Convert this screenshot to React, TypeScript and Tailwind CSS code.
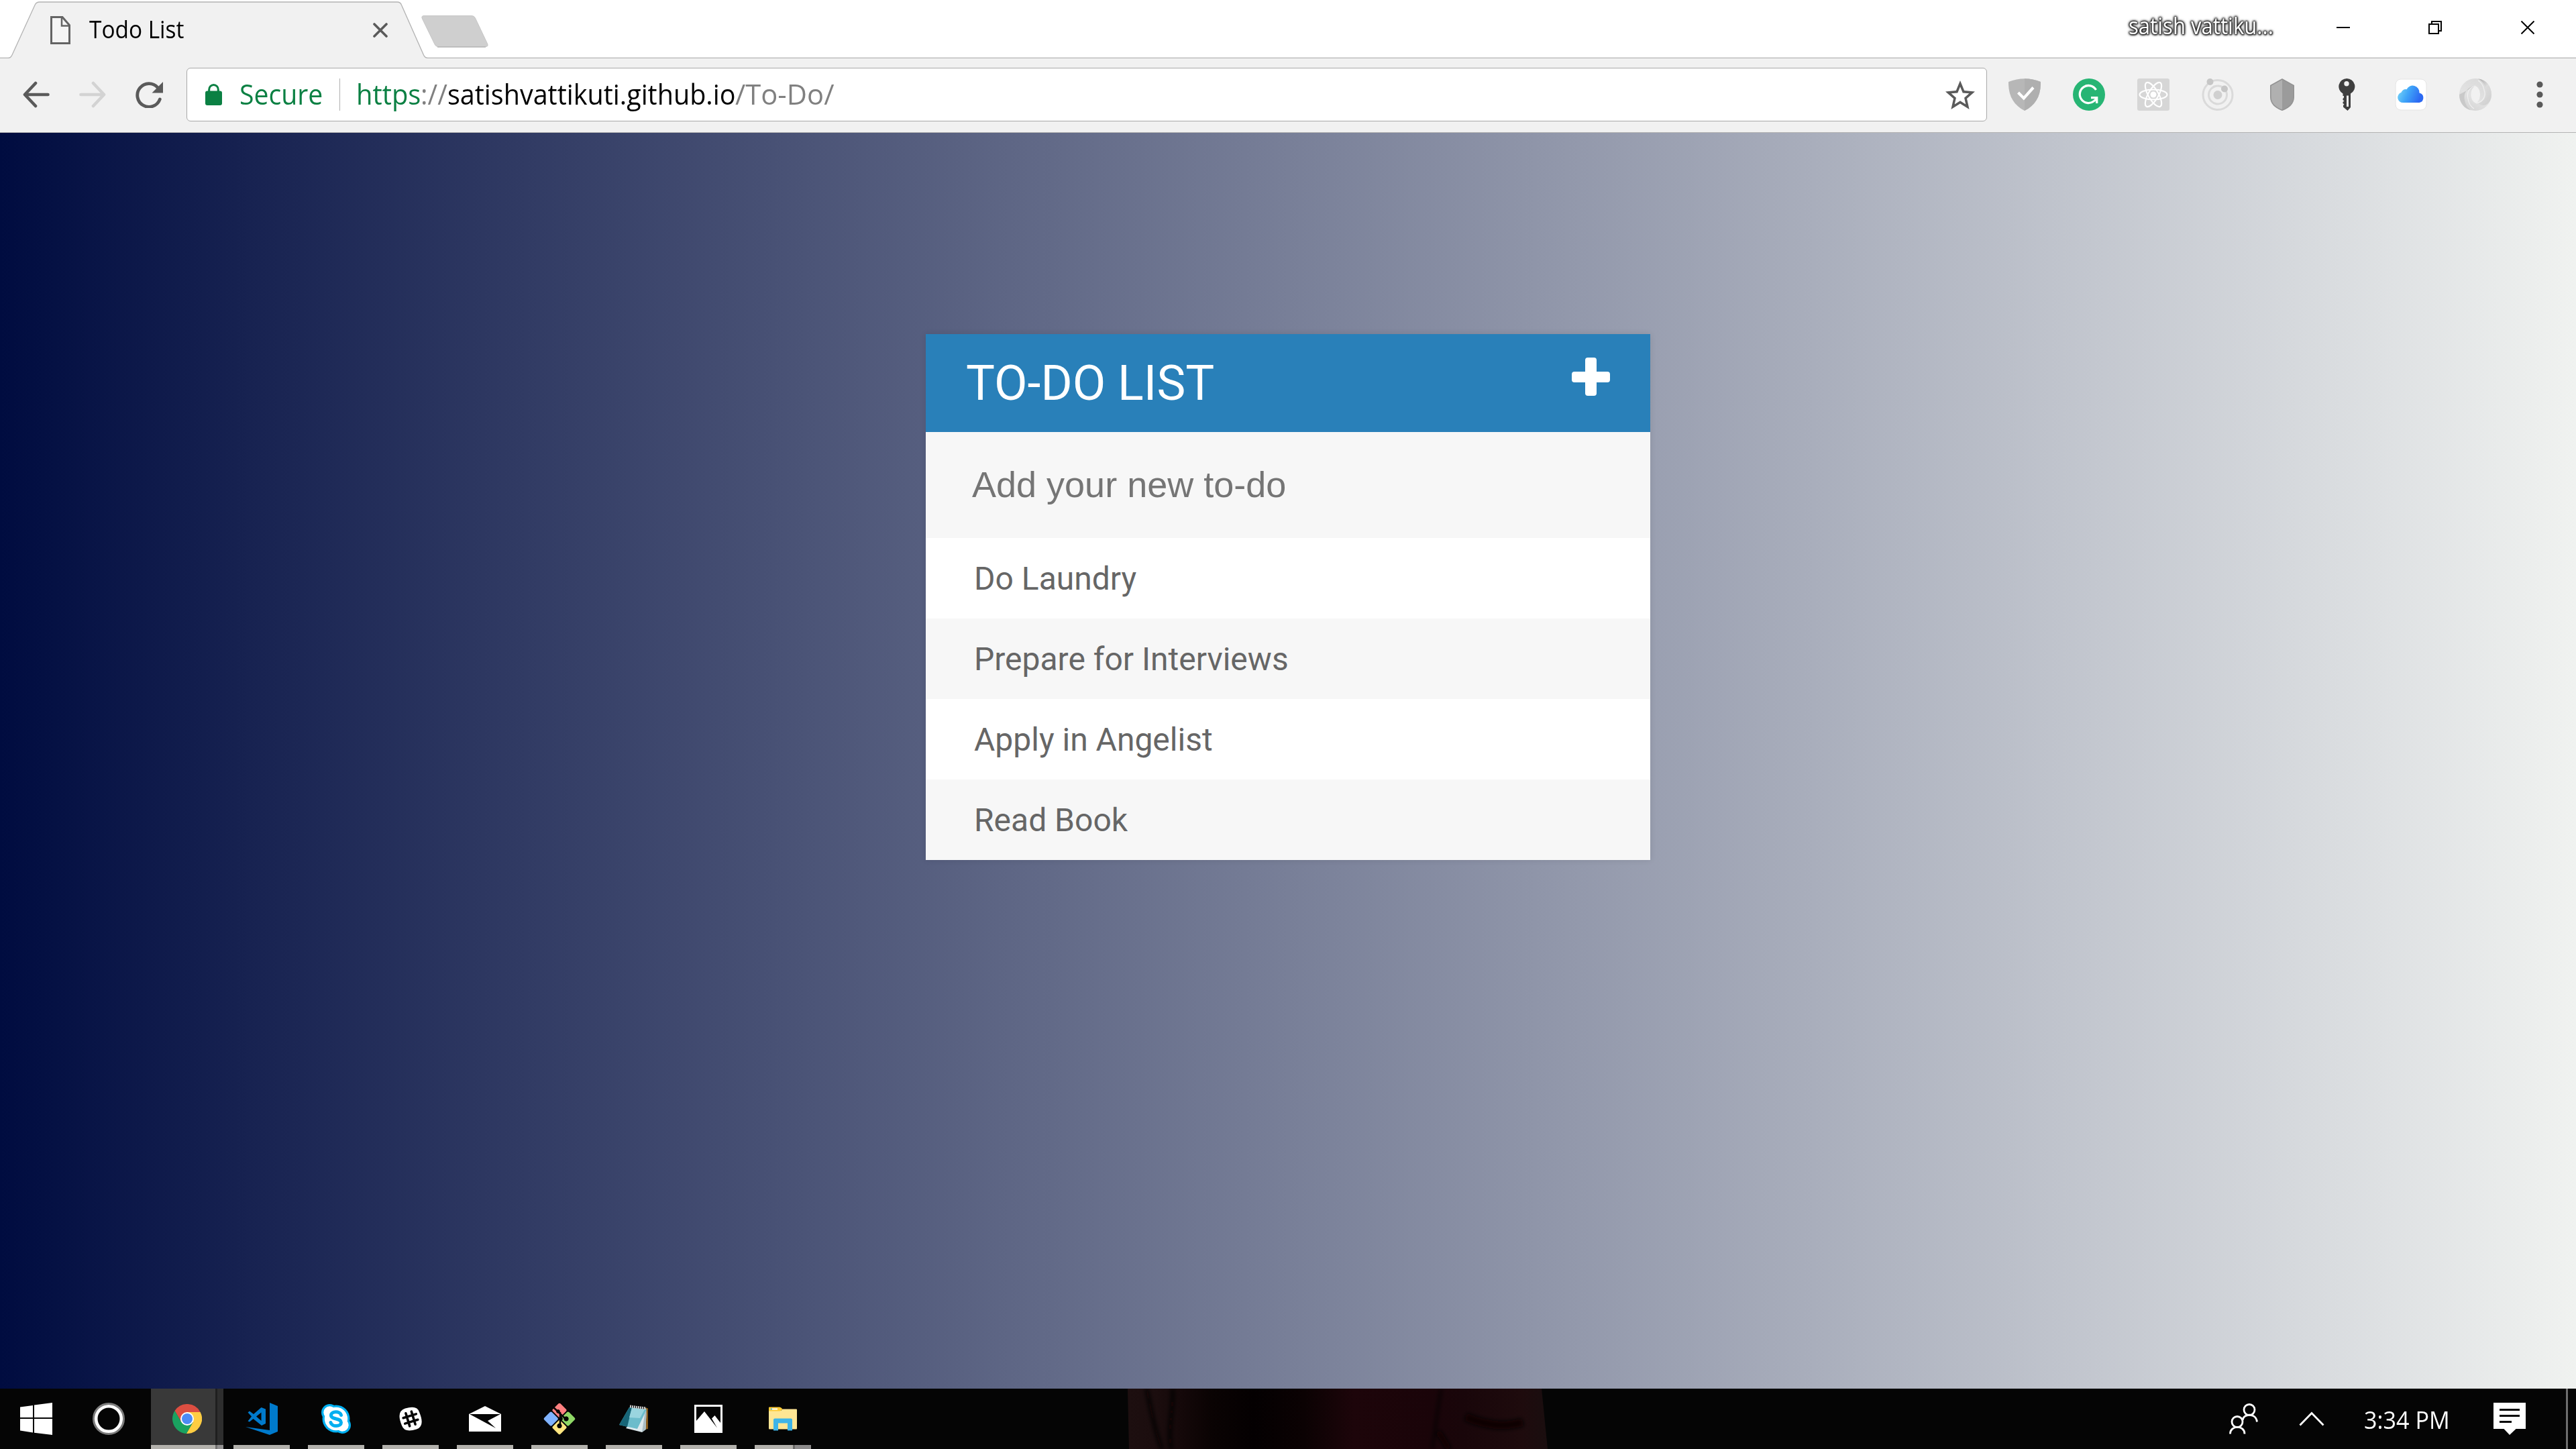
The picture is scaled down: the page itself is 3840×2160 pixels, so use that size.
import React, { useLayoutEffect, useRef, useState } from 'react';

const todos = ['Do Laundry', 'Prepare for Interviews', 'Apply in Angelist', 'Read Book'];

/* Text that is condensed or widened horizontally to an exact width. */
function Fit({ width, className = '', children }: { width: number; className?: string; children: React.ReactNode }) {
  const ref = useRef<HTMLSpanElement>(null);
  const [scale, setScale] = useState(1);
  useLayoutEffect(() => {
    if (ref.current) setScale(width / ref.current.offsetWidth);
  }, [width]);
  return (
    <span className={'block shrink-0 whitespace-nowrap ' + className} style={{ width }}>
      <span ref={ref} className="inline-block origin-left" style={{ transform: `scaleX(${scale})` }}>
        {children}
      </span>
    </span>
  );
}

function TabStrip() {
  return (
    <div className="relative flex h-[87px] w-full bg-white">
      <svg className="absolute inset-0" width="3840" height="87" viewBox="0 0 3840 87">
        <path
          d="M-2 86.5H13Q17 86.5 18.5 82L52.5 7Q54.500 3 59 3H593Q597.500 3 599 7L632 82Q633.500 86.500 638 86.500H3842V90H-2Z"
          fill="#f1f1f1"
        />
        <path
          d="M-2 86.500H12Q16 86.500 18 82L52 7.500Q54 3 59 3H592Q597 3 598.500 7.500L631.500 82Q633.500 86.500 638 86.500H3842"
          fill="none"
          stroke="#b3b3b3"
          strokeWidth="1.300"
        />
        <path d="M632 23.500H703Q707 23.500 708.500 27L726.500 65Q728.500 69.500 724 69.500H653Q649.500 69.500 648 66L629.500 28Q627.500 23.500 632 23.500Z" fill="#cfcfcf" stroke="#c6c6c6" />
        <path d="M652 70H724" stroke="#b4b4b4" strokeWidth="1.300" />
      </svg>
      <div className="relative flex h-full w-full pl-[75px]">
        <svg className="mt-6 shrink-0" width="30" height="42" viewBox="0 0 30 42">
          <path d="M1.500 1.500H18L28.500 13.500V40.500H1.500Z" fill="#f5f5f5" stroke="#646464" strokeWidth="3" />
          <path d="M17 2V14.500H28" fill="none" stroke="#646464" strokeWidth="2.500" />
        </svg>
        <Fit width={141} className="ml-7 mt-2 h-[72px] text-[36px] leading-[72px] text-black">
          Todo List
        </Fit>
        <svg className="ml-[282px] mt-[34px] shrink-0" width="22" height="22" viewBox="0 0 22 22">
          <path d="M2 2L20 20M20 2L2 20" stroke="#5a5a5a" strokeWidth="3.600" strokeLinecap="round" />
        </svg>
        <Fit
          width={216}
          className="ml-[2595px] mt-1.5 h-[64px] text-[35px] leading-[64px] text-white [text-shadow:0_0_2px_#222,0_0_3px_#222,0_0_3px_#222,0_0_4px_#333,0_0_4px_#333,0_0_6px_#444,1px_1px_2px_#333]"
        >
          satish vattiku...
        </Fit>
        <svg className="ml-[94px] mt-[31px] shrink-0" width="20" height="20" viewBox="0 0 20 20">
          <path d="M0 10H20" stroke="#000" strokeWidth="2" />
        </svg>
        <svg className="ml-[117px] mt-[31px] shrink-0" width="20" height="20" viewBox="0 0 20 20">
          <path d="M1 5H15V19H1ZM5 5V1H19V15H15" fill="none" stroke="#000" strokeWidth="2" />
        </svg>
        <svg className="ml-[118px] mt-[31px] shrink-0" width="20" height="20" viewBox="0 0 20 20">
          <path d="M.5 .5L19.500 19.500M19.500 .5L.5 19.500" stroke="#000" strokeWidth="2" />
        </svg>
      </div>
    </div>
  );
}

function Extensions() {
  return (
    <div className="ml-8 flex shrink-0 gap-12">
      <svg width="48" height="48" viewBox="0 0 48 48">
        <path d="M0 5Q24 -4.500 48 5C48.500 26 40 40 24 48C8 40 -.5 26 0 5Z" fill="#b7b7b7" />
        <path d="M24 .3Q37 .5 48 5C48.500 26 40 40 24 48Z" fill="#afafaf" />
        <path d="M14.500 21L22.800 29.500L37 13.500" fill="none" stroke="#fff" strokeWidth="4.200" />
      </svg>
      <svg width="48" height="48" viewBox="0 0 48 48">
        <circle cx="24" cy="24" r="24" fill="#27b574" />
        <path d="M34.500 17A13 13 0 1 0 31 34Q34.500 31.500 35 28.500" fill="none" stroke="#fff" strokeWidth="3.300" />
        <path d="M27 28.700H35.700V37" fill="none" stroke="#fff" strokeWidth="3.300" />
      </svg>
      <svg width="48" height="48" viewBox="0 0 48 48">
        <rect width="48" height="48" rx="3" fill="#d6d6d6" />
        <g fill="none" stroke="#fff" strokeWidth="2.200">
          <ellipse cx="24" cy="24" rx="20.500" ry="7.500" />
          <ellipse cx="24" cy="24" rx="20.500" ry="7.500" transform="rotate(60 24 24)" />
          <ellipse cx="24" cy="24" rx="20.500" ry="7.500" transform="rotate(120 24 24)" />
        </g>
        <circle cx="24" cy="24" r="4.500" fill="#fff" />
      </svg>
      <svg width="48" height="48" viewBox="0 0 48 48">
        <g fill="none" stroke="#dadada" strokeWidth="3">
          <circle cx="24" cy="24.500" r="22" />
          <circle cx="24" cy="24.500" r="13.500" />
        </g>
        <circle cx="24" cy="24.500" r="6.500" fill="#d0d0d0" />
        <circle cx="12.500" cy="5" r="5" fill="#c6c6c6" />
        <circle cx="34" cy="15.500" r="5" fill="#c6c6c6" />
      </svg>
      <svg width="48" height="48" viewBox="0 0 48 48">
        <path d="M24 1L41.200 10.500V28C41 38 34 43.500 24 47.300C14 43.500 7 38 6.800 28V10.500Z" fill="#b0b0b0" />
        <path d="M24 1L41.200 10.500V28C41 38 34 43.500 24 47.300Z" fill="#9b9b9b" />
        <path d="M24 1L41.200 10.500V28C41 38 34 43.500 24 47.300C14 43.500 7 38 6.800 28V10.500Z" fill="none" stroke="#939393" strokeWidth="1.600" />
      </svg>
      <svg width="48" height="48" viewBox="0 0 48 48">
        <path
          fillRule="evenodd"
          d="M24.300 0A12 12 0 0 1 30 22.600V43L25.500 48L19 42.500V40L20.500 38.500L18.500 37V35L20.500 33.500L18.500 32V30L20 28.500V26H18.500V22.500A12 12 0 0 1 24.300 0ZM24 4A3.700 3.700 0 1 0 24 11.400A3.700 3.700 0 1 0 24 4ZM24 25.500V42H27V25.500Z"
          fill="#3f3f3f"
        />
      </svg>
      <svg width="48" height="48" viewBox="0 0 48 48">
        <defs>
          <linearGradient id="cloud" x1="0" y1="0" x2="1" y2="0.300">
            <stop offset="0" stopColor="#7fdcf7" />
            <stop offset="0.500" stopColor="#3fa4f8" />
            <stop offset="1" stopColor="#2c69f2" />
          </linearGradient>
        </defs>
        <rect x="1" y="1" width="46" height="46" rx="8" fill="#fff" stroke="#e4e4e4" />
        <path d="M12 36A7.800 7.800 0 0 1 9.500 20.800A6.500 6.500 0 0 1 17.500 16.300A10 10 0 0 1 36.500 21.500A7.400 7.400 0 0 1 36.500 36Z" fill="url(#cloud)" />
      </svg>
      <svg width="48" height="48" viewBox="0 0 48 48">
        <defs>
          <linearGradient id="swirlA" x1="0" y1="1" x2="0.600" y2="0">
            <stop offset="0" stopColor="#cfcfcf" />
            <stop offset="0.500" stopColor="#e2e2e2" />
            <stop offset="1" stopColor="#dadada" />
          </linearGradient>
          <linearGradient id="swirlB" x1="0.200" y1="0" x2="0.800" y2="1">
            <stop offset="0" stopColor="#b4b4b4" />
            <stop offset="0.400" stopColor="#dcdcdc" />
            <stop offset="1" stopColor="#d0d0d0" />
          </linearGradient>
        </defs>
        {/* ring */}
        <path
          fillRule="evenodd"
          d="M24 0A24 24 0 1 1 24 48A24 24 0 1 1 24 0ZM24 11C20 13 17.500 18 17.500 24C17.500 30 20 35 25 37C28.500 35 31 30 31 24C31 18 28.500 13 24 11Z"
          fill="url(#swirlA)"
        />
        {/* overlapping blades */}
        <path d="M28 .3C41 2 48 12 48 24C48 36 38 45 28 37C36 35 41 28 40 19C39 10 35 4 28 .3Z" fill="url(#swirlB)" />
        <path d="M24 11C12 12 6 22 8 32C9 39 13 45 18 47.500C7 45 0 36 0 24" fill="#c9c9c9" />
        <path d="M24 11C14 13 11 22 13 30C14 37 17 42 22 45" fill="none" stroke="#f0f0f0" strokeWidth="1.200" />
        <path d="M25 37C36 35 40 26 37 17C36 11 33 6 28 3" fill="none" stroke="#f0f0f0" strokeWidth="1.200" />
      </svg>
    </div>
  );
}

function Toolbar() {
  return (
    <div className="flex h-[111px] w-full items-center border-b border-[#b3b3b3] bg-[#f1f1f1] pb-0.5 pl-[34px]">
      <svg className="shrink-0" width="40" height="40" viewBox="0 0 40 40">
        <path d="M37.500 20H3M19 3L3 20L19 37" fill="none" stroke="#5a5a5a" strokeWidth="4.600" strokeLinecap="round" strokeLinejoin="round" />
      </svg>
      <svg className="ml-11 shrink-0" width="40" height="40" viewBox="0 0 40 40">
        <path d="M2.500 20H37M21 3L37 20L21 37" fill="none" stroke="#d3d3d3" strokeWidth="4.600" strokeLinecap="round" strokeLinejoin="round" />
      </svg>
      <svg className="ml-11 shrink-0" width="41" height="40" viewBox="0 0 41 40">
        <path d="M33 9.500A17.300 17.300 0 1 0 36.300 27" fill="none" stroke="#5a5a5a" strokeWidth="4.800" strokeLinecap="round" />
        <path d="M41 1V17.500H24.500Z" fill="#5a5a5a" />
      </svg>
      <div className="ml-[35px] flex h-20 w-[2684px] shrink-0 items-center rounded-[6px] border border-[#a9a9a9] bg-white pl-[27px] text-[42px] leading-[76px]">
        <svg className="shrink-0" width="25" height="32" viewBox="0 0 25 32">
          <rect y="10.500" width="25" height="21.500" rx="3" fill="#0b8043" />
          <path d="M5.700 12V8.500A6.800 7 0 0 1 19.300 8.500V12" fill="none" stroke="#0b8043" strokeWidth="3" />
        </svg>
        <Fit width={124} className="-mt-[3px] ml-[26px] text-[#0b8043]">
          Secure
        </Fit>
        <div className="ml-[25px] h-12 w-px bg-[#b0b0b0]" />
        <Fit width={96} className="-mt-[3px] ml-6 text-[#0b8043]">
          https
        </Fit>
        <Fit width={40} className="-mt-[3px] text-[#808080]">
          ://
        </Fit>
        <Fit width={429} className="-mt-[3px] text-black">
          satishvattikuti.github.io
        </Fit>
        <Fit width={147} className="-mt-[3px] text-[#808080]">
          /To-Do/
        </Fit>
        <svg className="ml-auto mr-[17px] shrink-0" width="44" height="43" viewBox="2 2 20 19" preserveAspectRatio="none">
          <path
            d="M22 9.240l-7.190-.62L12 2 9.190 8.630 2 9.240l5.460 4.730L5.820 21 12 17.270 18.180 21l-1.630-7.030L22 9.240zM12 15.400l-3.760 2.270 1-4.280-3.320-2.880 4.380-.38L12 6.100l1.710 4.040 4.380.38-3.320 2.880 1 4.280L12 15.400z"
            fill="#5a5a5a"
          />
        </svg>
      </div>
      <Extensions />
      <svg className="ml-[67px] shrink-0" width="10" height="40" viewBox="0 0 10 40">
        <g fill="#5a5a5a">
          <circle cx="5" cy="5" r="4.600" />
          <circle cx="5" cy="20" r="4.600" />
          <circle cx="5" cy="35" r="4.600" />
        </g>
      </svg>
    </div>
  );
}

function TodoCard() {
  return (
    <div className="w-[1080px] bg-[#f7f7f7] font-['Roboto',sans-serif] shadow-[0_0_9px_rgba(0,0,0,0.1)]">
      <div className="flex h-[146px] items-center justify-between bg-[#2980b9] px-[60px] text-[72px] leading-[146px] text-white">
        <h1 className="pt-0.5">TO-DO LIST</h1>
        <svg className="mb-[19px]" width="57" height="57" viewBox="0 0 57 57">
          <rect x="20" width="17" height="57" rx="4" fill="#fff" />
          <rect y="21" width="57" height="16" rx="4" fill="#fff" />
        </svg>
      </div>
      <div className="h-[158px] pl-[69px] font-['Liberation_Sans',sans-serif] text-[54px] leading-[156px] text-[#757575]">Add your new to-do</div>
      <ul className="text-[48px] leading-[122px] text-[#666]">
        {todos.map((t) => (
          <li key={t} className="h-[120px] bg-[#f7f7f7] pl-[72px] odd:bg-white">
            {t}
          </li>
        ))}
      </ul>
    </div>
  );
}

const vscode = (
  <svg width="48" height="48" viewBox="0 0 48 48">
    <path d="M36 0L48 5V43L36 48L0 36L36 41Z" fill="#007acc" />
    <path fillRule="evenodd" d="M23.500 7L30 9.500V31L24 34L11.500 24L6 28.500L3.500 27.500L9 20.500L3.500 14.500L6 12.500L12 17ZM23.500 14.500L16 20.500L23.500 27Z" fill="#007acc" />
  </svg>
);
const skype = (
  <svg width="44" height="44" viewBox="0 0 44 44">
    <g fill="#00aff0">
      <circle cx="22" cy="22" r="20.500" />
      <circle cx="12.500" cy="12.500" r="12.500" />
      <circle cx="31.500" cy="31.500" r="12.500" />
    </g>
    <g fill="#fff">
      <circle cx="22" cy="22" r="17.200" />
      <circle cx="12.500" cy="12.500" r="9.200" />
      <circle cx="31.500" cy="31.500" r="9.200" />
    </g>
    <path d="M29.500 16.500C28 10 14.500 10.500 14.500 16.800C14.500 23.500 29.500 20.500 29.500 27.500C29.500 34 15.500 34.500 14 27.500" fill="none" stroke="#00aff0" strokeWidth="5" strokeLinecap="round" />
  </svg>
);
const slack = (
  <svg width="36" height="36" viewBox="0 0 36 36">
    <path d="M10 2.500Q28 -3 31 8Q40 29 27 33.500Q9 39.500 5 28Q-4 7 10 2.500Z" fill="#fff" />
    <g transform="rotate(-17 18 18)" stroke="#050505" strokeWidth="3.600" strokeLinecap="round">
      <path d="M8 13.600H28M8 22.400H28M13.600 8V28M22.400 8V28" />
    </g>
  </svg>
);
const mail = (
  <svg width="48" height="38" viewBox="0 0 48 38">
    <path d="M0 12L24 0L48 12V38H0Z" fill="#fff" />
    <path d="M1 12H47L28 22L40 33Z" fill="#050505" />
  </svg>
);
const git = (
  <svg width="48" height="48" viewBox="0 0 48 48">
    <g transform="rotate(45 24 24)">
      <rect x="7" y="7" width="16" height="16" rx="2" fill="#ff8080" />
      <rect x="25" y="7" width="16" height="16" rx="2" fill="#8fd866" />
      <rect x="25" y="25" width="16" height="16" rx="2" fill="#ffe680" />
      <rect x="7" y="25" width="16" height="16" rx="2" fill="#80b3ff" />
    </g>
    <g stroke="#050505" fill="#050505">
      <path d="M14 6L33 24M25 14V35" strokeWidth="2.600" fill="none" />
      <circle cx="24" cy="34.500" r="3.200" />
      <circle cx="34" cy="24" r="3.200" />
      <circle cx="22" cy="13" r="2.400" />
      <circle cx="26" cy="24" r="2.400" />
    </g>
  </svg>
);
const notepad = (
  <svg width="44" height="42" viewBox="0 0 44 42">
    <path d="M38 4L43 5.500V36L38 37Z" fill="#8a5c1c" />
    <path d="M40 5L40.500 14L39.500 37L34 41L10 35L14 30Z" fill="#dce8ec" />
    <path d="M34 41L38 14L40.500 8L39.500 37Z" fill="#a9bcc3" />
    <path d="M15 4L41 7L27 36L0 30Z" fill="#6cbccb" />
    <path d="M15 4L19 4.500L12 33L0 30Z" fill="#176577" />
    <path d="M19 4.500L38 7L31 20L15 19Z" fill="#9ad5df" />
    <path d="M16 2.500L40 5.500" stroke="#c9c9c9" strokeWidth="4" strokeDasharray="2 1" />
  </svg>
);
const photos = (
  <svg width="42" height="42" viewBox="0 0 42 42">
    <rect width="42" height="42" fill="#fff" />
    <path d="M3 3H39V27L30.500 16L26 20.500L34 34.500L15 10L3 24Z" fill="#050505" />
  </svg>
);
const explorer = (
  <svg width="42" height="36" viewBox="0 0 42 36">
    <path d="M0 6H18L20.500 3.500H41Q42 3.500 42 4.500V32Q42 33.500 41 33.500H1Q0 33.500 0 32Z" fill="#ffe694" />
    <path d="M1 .5H16Q18 .5 20.500 3.500Q18 6.500 16 6.500H0V1.500Q0 .5 1 .5Z" fill="#ffcb35" />
    <path d="M3 3.500H13" stroke="#fff" strokeWidth="2" />
    <path d="M3 3.500H5" stroke="#3db4e8" strokeWidth="2" />
    <path d="M7 35.500V19.500Q7 17.500 9 17.500H33Q35 17.500 35 19.500V35.500H28V24.500H14V35.500Z" fill="#3db4e8" />
  </svg>
);

const apps = [vscode, skype, slack, mail, git, notepad, photos];

function AppButton({ children, split = false }: { children: React.ReactNode; split?: boolean }) {
  return (
    <div className="flex h-[90px] w-[84px] shrink-0 flex-col">
      <div className="flex h-[84px] items-center justify-center pt-1.5">{children}</div>
      <div className="flex h-1.5 w-full">
        <div className="grow bg-[#b3b1ac]" />
        {split && <div className="w-[3px] bg-[#6b6a68]" />}
        {split && <div className="w-6 bg-[#8d8b8b]" />}
      </div>
    </div>
  );
}

/* The wallpaper that shows faintly through the bar. */
function Backdrop() {
  return (
    <svg className="absolute left-[1680px] top-0" width="628" height="90" viewBox="0 0 628 90">
      <defs>
        <linearGradient id="cloth" x1="0" y1="0" x2="1" y2="0">
          <stop offset="0" stopColor="#1d0f10" />
          <stop offset="0.070" stopColor="#1b0d0e" />
          <stop offset="0.130" stopColor="#140809" />
          <stop offset="0.200" stopColor="#0a0303" />
          <stop offset="0.300" stopColor="#040001" />
          <stop offset="0.420" stopColor="#0b0203" />
          <stop offset="0.540" stopColor="#1d050a" />
          <stop offset="0.720" stopColor="#1a0409" />
          <stop offset="0.800" stopColor="#19060a" />
          <stop offset="0.940" stopColor="#1e0b0d" />
          <stop offset="1" stopColor="#1a0e0f" />
        </linearGradient>
        <filter id="soft" x="-50%" y="-50%" width="200%" height="200%">
          <feGaussianBlur stdDeviation="3" />
        </filter>
      </defs>
      <path d="M1 0H618L627 90H3Z" fill="url(#cloth)" />
      <g filter="url(#soft)" fill="none" stroke="#090203">
        <path d="M29 0C36 30 40 60 52 90" strokeWidth="5" />
        <path d="M68 0C70 30 60 60 66 90" strokeWidth="5" />
        <path d="M468 0L455 90" strokeWidth="3" />
        <path d="M505 42Q550 62 590 50" strokeWidth="12" />
        <path d="M464 64L480 90" strokeWidth="8" />
      </g>
    </svg>
  );
}

function Taskbar() {
  return (
    <div className="relative flex h-[90px] w-full bg-[#050505]">
      <Backdrop />
      <div className="relative flex h-full w-full">
        <div className="flex w-[108px] shrink-0 items-center justify-center">
          <svg width="48" height="48" viewBox="0 0 48 48">
            <path d="M0 6.500L19 4V22H0ZM21 3.500L48 0V22H21ZM0 24H19V44.500L0 41.500ZM21 24H48V48L21 44.700Z" fill="#fff" />
          </svg>
        </div>
        <div className="mr-[9px] flex w-[108px] shrink-0 items-center justify-center">
          <svg width="48" height="48" viewBox="0 0 48 48">
            <circle cx="24" cy="24" r="22.500" fill="none" stroke="#7d7d7d" strokeWidth="3" />
            <circle cx="24" cy="24" r="18.800" fill="none" stroke="#fff" strokeWidth="4.600" />
          </svg>
        </div>
        <div className="relative w-[108px] shrink-0">
          <div className="flex h-full">
            <div className="flex w-24 flex-col bg-[#393939]">
              <div className="mt-auto h-1.5 bg-[#b3b1ac]" />
            </div>
            <div className="flex w-[3px] flex-col bg-[#1f1f1f]">
              <div className="mt-auto h-1.5 bg-[#717070]" />
            </div>
            <div className="flex w-[9px] flex-col bg-[#2e2e2e]">
              <div className="mt-auto h-1.5 bg-[#929090]" />
            </div>
          </div>
          <svg className="absolute left-8 top-[23px]" width="44" height="44" viewBox="-22 -22 44 44">
            <path d="M19.600 -10A22 22 0 0 0 -18.460 -11.970L-8.660 5L0 0V-10Z" fill="#dc4e41" />
            <path d="M0 -10H19.600A22 22 0 0 1 -1.140 21.970L8.660 5L0 0Z" fill="#ffcd42" />
            <path d="M8.660 5L-1.140 21.970A22 22 0 0 1 -18.460 -11.970L-8.660 5L0 0Z" fill="#1aa260" />
            <circle r="10" fill="#fff" />
            <circle r="8" fill="#4c8bf5" />
          </svg>
        </div>
        <div className="ml-[15px] flex shrink-0 gap-[27px]">
          {apps.map((icon, i) => (
            <AppButton key={i}>{icon}</AppButton>
          ))}
          <AppButton split>{explorer}</AppButton>
        </div>
        <div className="ml-auto flex shrink-0 items-center">
          <svg width="44" height="48" viewBox="0 0 44 48">
            <g fill="none" stroke="#fff" strokeWidth="2.800">
              <circle cx="30" cy="10.500" r="8" />
              <circle cx="12" cy="28.500" r="8" />
              <path d="M1.500 46.500C1.500 33 23 33 23 46.500M20 26C21 16 40 14.500 41.500 28.500" />
            </g>
          </svg>
          <svg className="ml-[60px]" width="38" height="22" viewBox="0 0 38 22">
            <path d="M1.500 20.500L19 2.500L36.500 20.500" fill="none" stroke="#fff" strokeWidth="2.800" />
          </svg>
          <Fit width={128} className="ml-[59px] mt-[3px] text-[36px] leading-[72px] text-white">
            3:34 PM
          </Fit>
          <svg className="ml-[65px]" width="48" height="48" viewBox="0 0 48 48">
            <path fillRule="evenodd" d="M0 0H48V39H33.500L24 48L15.500 39H0ZM9 9V12H39V9ZM9 18V21H39V18ZM9 27V30H27V27Z" fill="#fff" />
          </svg>
          <div className="ml-[60px] mr-3 h-[90px] w-[3px] bg-[#6e6e6e]" />
        </div>
      </div>
    </div>
  );
}

export default function App() {
  return (
    <div className="flex h-[2160px] w-[3840px] flex-col overflow-hidden font-['Open_Sans','Noto_Sans',sans-serif]">
      <TabStrip />
      <Toolbar />
      <main className="flex grow items-start justify-center bg-[linear-gradient(90deg,#000c40,#f0f2f0)] pt-[300px]">
        <TodoCard />
      </main>
      <Taskbar />
    </div>
  );
}
